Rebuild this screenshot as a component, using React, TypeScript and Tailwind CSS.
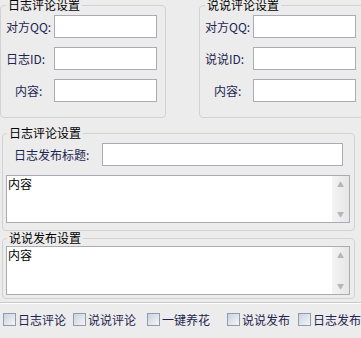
const font = { fontFamily: '"Noto Sans CJK SC", "Liberation Sans", sans-serif' };

type RowProps = { label: string; indent?: boolean };

const Row = ({ label, indent }: RowProps) => {
  return (
    <div className="flex items-center h-[23px]">
      <div className={`w-[53px] text-[12px] leading-[12px] text-[#1c2450] whitespace-nowrap ${indent ? "pl-[14px]" : "pl-[5px]"}`}>
        {label}
      </div>
      <div className="w-[103px] h-[23px] bg-white border border-[#a9adb3]"></div>
    </div>
  );
};

type BoxProps = { title: string; rows: RowProps[]; className: string };

const SmallBox = ({ title, rows, className }: BoxProps) => {
  return (
    <fieldset className={`h-[118px] border border-[#d2d2d2] rounded-[4px] shrink-0 ${className}`}>
      <legend className="ml-[5px] px-[2px] text-[12px] leading-[10px] text-black">{title}</legend>
      <div className="flex flex-col gap-[9px] pt-[5px]">
        {rows.map((r) => (
          <Row key={r.label} label={r.label} indent={r.indent} />
        ))}
      </div>
    </fieldset>
  );
};

const TextBox = ({ height }: { height: string }) => {
  return (
    <div className={`flex ml-[3px] w-[344px] ${height} bg-white border border-[#a9adb3]`}>
      <div className="flex-1 pl-[1px] pt-[1px] text-[12px] leading-[13px] text-black">内容</div>
      <div className="w-[17px] flex flex-col justify-between items-center bg-gradient-to-r from-[#f4f4f4] to-[#e6e6e6] py-[4px] text-[7px] leading-[8px] text-[#b5b5b5]">
        <span>▲</span>
        <span>▼</span>
      </div>
    </div>
  );
};

const Check = ({ label, className }: { label: string; className: string }) => {
  return (
    <div className={`flex items-center gap-[2px] ${className}`}>
      <div className="w-[13px] h-[13px] border border-[#8e9bb0] bg-gradient-to-br from-[#c9d3df] to-[#f4f6f8]"></div>
      <span className="text-[12px] leading-[12px] text-[#1c2450]">{label}</span>
    </div>
  );
};

export default function App() {
  return (
    <div className="w-[361px] h-[338px] bg-[#ececec] overflow-hidden" style={font}>
      <div className="flex gap-[33px]">
        <SmallBox
          title="日志评论设置"
          className="w-[166px]"
          rows={[{ label: "对方QQ:" }, { label: "日志ID:" }, { label: "内容:", indent: true }]}
        />
        <SmallBox
          title="说说评论设置"
          className="w-[166px]"
          rows={[{ label: "对方QQ:" }, { label: "说说ID:" }, { label: "内容:", indent: true }]}
        />
      </div>

      <fieldset className="mt-[10px] ml-[2px] w-[353px] border border-[#d2d2d2] rounded-[4px] pb-[7px]">
        <legend className="ml-[4px] px-[2px] text-[12px] leading-[10px] text-black">日志评论设置</legend>
        <div className="flex items-center pt-[5px] h-[23px] box-content">
          <div className="w-[99px] pl-[11px] text-[12px] leading-[12px] text-[#1c2450]">日志发布标题:</div>
          <div className="w-[241px] h-[23px] bg-white border border-[#a9adb3]"></div>
        </div>
        <div className="mt-[9px]">
          <TextBox height="h-[48px]" />
        </div>
      </fieldset>

      <fieldset className="mt-[2px] ml-[2px] w-[353px] border border-[#d2d2d2] rounded-[4px] pb-[3px]">
        <legend className="ml-[4px] px-[2px] text-[12px] leading-[10px] text-black">说说发布设置</legend>
        <div className="pt-[3px]">
          <TextBox height="h-[49px]" />
        </div>
      </fieldset>

      <div className="mt-[3px] h-[2px] border-t border-[#c8c8c8] border-b border-b-white"></div>

      <div className="flex items-center mt-[9px] pl-[3px]">
        <Check label="日志评论" className="w-[70px]" />
        <Check label="说说评论" className="w-[74px]" />
        <Check label="一键养花" className="w-[80px]" />
        <Check label="说说发布" className="w-[71px]" />
        <Check label="日志发布" className="" />
      </div>
    </div>
  );
}
